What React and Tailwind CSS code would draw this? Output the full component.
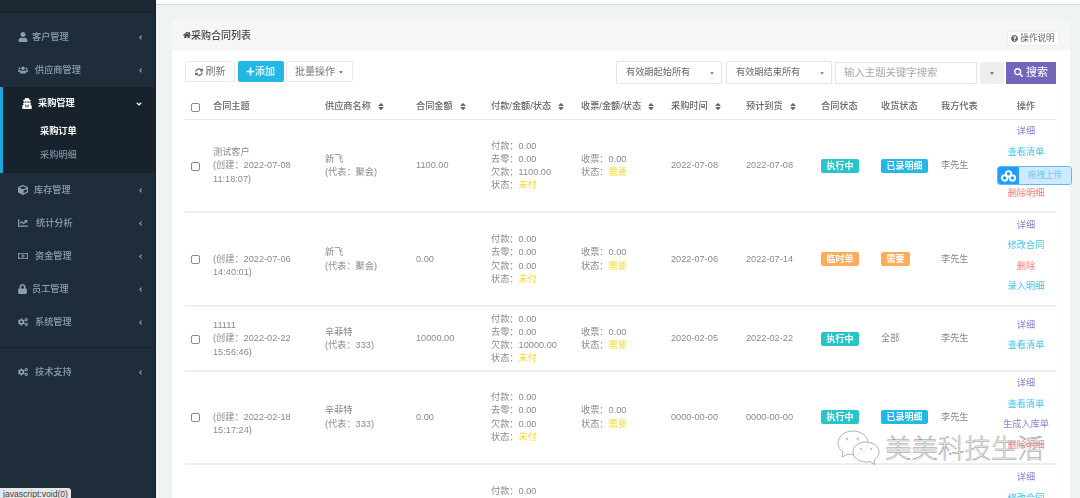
import React from "react";
import {
  FaUser, FaUsers, FaUserSecret, FaCube, FaChartLine, FaRegMoneyBillAlt, FaLock, FaCogs,
  FaAngleLeft, FaAngleDown, FaHome, FaSyncAlt, FaPlus, FaCaretDown, FaQuestionCircle, FaSearch, FaSort,
} from "react-icons/fa";

const font = "font-['Liberation_Sans','Noto_Sans_CJK_SC',sans-serif]";
const cols = "grid grid-cols-[28px_112px_91px_75px_90px_90px_75px_75px_60px_60px_55px_60px]";

const menu = [
  { name: "客户管理", icon: FaUser, gap: "gap-[4px]" },
  { name: "供应商管理", icon: FaUsers, gap: "gap-[7px]" },
];
const menuAfter = [
  { name: "库存管理", icon: FaCube, gap: "gap-[6px]" },
  { name: "统计分析", icon: FaChartLine, gap: "gap-[8px]" },
  { name: "资金管理", icon: FaRegMoneyBillAlt, gap: "gap-[7px]" },
  { name: "员工管理", icon: FaLock, gap: "gap-[5px]" },
  { name: "系统管理", icon: FaCogs, gap: "gap-[7px]" },
];

const purple = "text-[#8d83cc]";
const cyan = "text-[#45c3ea]";
const red = "text-[#f47a7a]";

const rows = [
  {
    h: "h-[93px] pt-[1px]",
    opsPad: "pb-[8px]",
    subject: ["测试客户", "(创建：2022-07-08", "11:18:07)"],
    supplier: "新飞", rep: "(代表：聚会)", amount: "1100.00", owed: "1100.00",
    time: "2022-07-08", eta: "2022-07-08",
    status: ["执行中", "bg-[#27c4c8]"], recv: ["已录明细", "bg-[#23b7e5]"],
    // third link sits under the upload widget
    ops: [["详细", purple], ["查看清单", cyan], ["\u00a0", cyan], ["删除明细", red]],
  },
  {
    h: "h-[94px] pt-[1px]",
    opsPad: "pb-[8px]",
    subject: ["", "(创建：2022-07-06", "14:40:01)"],
    supplier: "新飞", rep: "(代表：聚会)", amount: "0.00", owed: "0.00",
    time: "2022-07-06", eta: "2022-07-14",
    status: ["临时单", "bg-[#fcad5a]"], recv: ["需要", "bg-[#fcad5a]"],
    ops: [["详细", purple], ["修改合同", cyan], ["删除", red], ["录入明细", cyan]],
  },
  {
    h: "h-[65px] pt-[1px]",
    opsPad: "pb-[8px]",
    subject: ["11111", "(创建：2022-02-22", "15:56:46)"],
    supplier: "辛菲特", rep: "(代表：333)", amount: "10000.00", owed: "10000.00",
    time: "2020-02-05", eta: "2022-02-22",
    status: ["执行中", "bg-[#27c4c8]"], recv: "全部",
    ops: [["详细", purple], ["查看清单", cyan]],
  },
  {
    h: "h-[93px] pt-0",
    opsPad: "pb-[7px]",
    subject: ["", "(创建：2022-02-18", "15:17:24)"],
    supplier: "辛菲特", rep: "(代表：333)", amount: "0.00", owed: "0.00",
    time: "0000-00-00", eta: "0000-00-00",
    status: ["执行中", "bg-[#27c4c8]"], recv: ["已录明细", "bg-[#23b7e5]"],
    ops: [["详细", purple], ["查看清单", cyan], ["生成入库单", purple], ["删除明细", red]],
  },
  {
    h: "h-[93px] pt-[1px]",
    opsPad: "pb-[6px]",
    subject: ["", "", ""],
    supplier: "", rep: "", amount: "", owed: "0.00",
    time: "", eta: "",
    status: null, recv: null,
    ops: [["详细", purple], ["修改合同", cyan], ["删除", red], ["录入明细", cyan]],
  },
];

const MenuItem = ({ item }) => {
  const Icon = item.icon;
  return (
    <div className="h-[33px] pl-[18px] pr-[11px] flex items-center justify-between text-[#8aa0b4]">
      <div className={`flex items-center ${item.gap}`}>
        <Icon className={item.icon === FaLock ? "w-[9px] h-[10px]" : "w-[10px] h-[10px]"} />
        <span className="font-medium">{item.name}</span>
      </div>
      <FaAngleLeft className="w-[7px] h-[7px]" />
    </div>
  );
};

const Badge = ({ label, color }) => (
  <span className={`inline-block rounded-[2px] px-[5.5px] h-[14px] leading-[14px] text-[9px] font-bold text-white ${color}`}>
    {label}
  </span>
);

const Sort = () => <FaSort className="w-[8px] h-[9px] text-[#666] ml-[6px]" />;

const HeadCell = ({ label, sort }) => (
  <div className="flex items-center text-[#666] font-medium">
    {label}
    {sort && <Sort />}
  </div>
);

const Checkbox = () => (
  <div className="w-[9px] h-[9px] ml-[6px] rounded-[2px] border border-[#8a8a8a] bg-white" />
);

const Row = ({ row }) => (
  <div className={`${cols} ${row.h} items-center border-b-2 border-[#eceff0] text-[#8a8a8a]`}>
    <Checkbox />
    <div className="flex flex-col">
      {row.subject.map((line, i) => (
        <span key={i} className="h-[13.3px]">{line}</span>
      ))}
    </div>
    <div className="flex flex-col">
      <span className="h-[13.3px]">{row.supplier}</span>
      <span className="h-[13.3px]">{row.rep}</span>
    </div>
    <div>{row.amount}</div>
    <div className="flex flex-col">
      <span className="h-[13.2px]">付款：0.00</span>
      <span className="h-[13.2px]">去零：0.00</span>
      <span className="h-[13.2px]">欠款：{row.owed}</span>
      <span className="h-[13.2px]">状态：<span className="text-[#fad733]">未付</span></span>
    </div>
    <div className="flex flex-col">
      <span className="h-[13.2px]">收票：0.00</span>
      <span className="h-[13.2px]">状态：<span className="text-[#fad733]">需要</span></span>
    </div>
    <div>{row.time}</div>
    <div>{row.eta}</div>
    <div>{row.status && <Badge label={row.status[0]} color={row.status[1]} />}</div>
    <div>
      {Array.isArray(row.recv) ? <Badge label={row.recv[0]} color={row.recv[1]} /> : row.recv}
    </div>
    <div>{row.status && "李先生"}</div>
    <div className={`flex flex-col items-center ${row.opsPad}`}>
      {row.ops.map(([label, color], i) => (
        <span key={i} className={`h-[20.5px] leading-[20.5px] ${color}`}>{label}</span>
      ))}
    </div>
  </div>
);

const App = () => {
  return (
    <div className={`${font} relative flex h-[498px] w-[1080px] overflow-hidden bg-[#f0f3f4] text-[9.2px] leading-[13.2px]`}>
      {/* Sidebar */}
      <aside className="w-[156px] shrink-0 bg-[#1f2c39] border-r border-[#17202a] blur-[0.4px]">
        <div className="h-[13px] border-b border-[#18222c] bg-[#1c2833]" />
        <div className="pt-[8px]">
          {menu.map((item) => <MenuItem key={item.name} item={item} />)}
          <div className="h-[86px] bg-[#18222c] border-l-[3px] border-[#19a9d5]">
            <div className="h-[33px] pl-[18px] pr-[12px] flex items-center justify-between text-white">
              <div className="flex items-center gap-[5px]">
                <FaUserSecret className="w-[12px] h-[11px]" />
                <span className="font-bold">采购管理</span>
              </div>
              <FaAngleDown className="w-[8px] h-[8px]" />
            </div>
            <div className="pl-[37px] text-white font-bold h-[23px] leading-[23px]">采购订单</div>
            <div className="pl-[37px] text-[#8aa0b4] h-[24px] leading-[24px]">采购明细</div>
          </div>
          <div className="pt-[1px]">
            {menuAfter.map((item) => <MenuItem key={item.name} item={item} />)}
          </div>
          <div className="mt-[8px] border-t border-[#18222c] pt-[8px]">
            <MenuItem item={{ name: "技术支持", icon: FaCogs, gap: "gap-[7px]" }} />
          </div>
        </div>
      </aside>

      {/* Main */}
      <main className="flex-1 min-w-0 blur-[0.4px]">
        <div className="h-[5px] bg-white border-b border-[#d5dadd]" />
        <div className="pt-[15px] pl-[16px] pr-[10px]">
          <div className="bg-white">
            <div className="h-[30px] bg-[#f5f7f7] pl-[11px] pr-[11px] flex items-center justify-between">
              <div className="flex items-center mt-[1px] text-[#444] font-medium text-[10px]">
                <FaHome className="w-[8px] h-[8px]" />
                采购合同列表
              </div>
              <button className="h-[15px] w-[52px] mt-[7px] bg-white border border-[#eceff1] rounded-[2px] flex items-center justify-center gap-[2px] text-[#666] text-[8.6px]">
                <FaQuestionCircle className="w-[7px] h-[7px] text-[#58666e]" />
                操作说明
              </button>
            </div>
            <div className="pl-[13px] pr-[14px]">
              {/* Toolbar */}
              <div className="h-[45px] pt-[11px] flex justify-between items-start text-[10px]">
                <div className="flex gap-[2.5px]">
                  <button className="h-[21px] w-[50px] bg-white border border-[#e8ecee] rounded-[2px] flex items-center justify-center gap-[3px] text-[#777]">
                    <FaSyncAlt className="w-[8px] h-[8px] text-[#58666e]" />
                    刷新
                  </button>
                  <button className="h-[21px] w-[46px] bg-[#23b7e5] rounded-[2px] flex items-center justify-center text-white font-medium">
                    <FaPlus className="w-[9px] h-[9px]" />
                    添加
                  </button>
                  <button className="h-[21px] w-[67px] bg-white border border-[#e8ecee] rounded-[2px] flex items-center justify-center gap-[3px] text-[#777]">
                    批量操作
                    <FaCaretDown className="w-[6px] h-[6px] text-[#58666e]" />
                  </button>
                </div>
                <div className="flex">
                  <div className="h-[23px] w-[106px] mr-[4px] bg-white border border-[#dfe5ee] rounded-[2px] pl-[9px] pr-[6px] flex items-center justify-between text-[#666] text-[9.2px]">
                    有效期起始所有
                    <FaCaretDown className="w-[6px] h-[6px] text-[#777]" />
                  </div>
                  <div className="h-[23px] w-[106px] mr-[3px] bg-white border border-[#dfe5ee] rounded-[2px] pl-[9px] pr-[6px] flex items-center justify-between text-[#666] text-[9.2px]">
                    有效期结束所有
                    <FaCaretDown className="w-[6px] h-[6px] text-[#777]" />
                  </div>
                  <div className="h-[22px] w-[142px] mt-[0.5px] mr-[3px] bg-white border border-[#dfe5ee] pl-[8px] flex items-center text-[#a9a9a9] text-[10.4px]">
                    输入主题关键字搜索
                  </div>
                  <div className="h-[22px] w-[24px] mt-[0.5px] mr-[2px] bg-[#eeeeee] rounded-[2px] flex items-center justify-center">
                    <FaCaretDown className="w-[6px] h-[6px] text-[#555]" />
                  </div>
                  <button className="h-[22px] w-[50px] mt-[0.5px] bg-[#7266ba] flex items-center justify-center gap-[3px] text-white text-[11px]">
                    <FaSearch className="w-[9px] h-[9px]" />
                    搜索
                  </button>
                </div>
              </div>

              {/* Table */}
              <div className={`${cols} h-[25px] items-center border-b border-[#e4e8ea]`}>
                <Checkbox />
                <HeadCell label="合同主题" />
                <HeadCell label="供应商名称" sort />
                <HeadCell label="合同金额" sort />
                <HeadCell label="付款/金额/状态" sort />
                <HeadCell label="收票/金额/状态" sort />
                <HeadCell label="采购时间" sort />
                <HeadCell label="预计到货" sort />
                <HeadCell label="合同状态" />
                <HeadCell label="收货状态" />
                <HeadCell label="我方代表" />
                <div className="text-center text-[#666] font-medium">操作</div>
              </div>
              {rows.map((row, i) => <Row key={i} row={row} />)}
            </div>
          </div>
        </div>
      </main>

      {/* Upload widget over the table */}
      <div className="absolute left-[997px] top-[166px] w-[75px] h-[19px] flex rounded-[3px] border border-[#63b8ff] overflow-hidden">
        <div className="w-[21px] bg-[#1e9fff] flex items-center justify-center">
          <svg width="15" height="12" viewBox="0 0 15 12" fill="none" stroke="white" strokeWidth="1.9">
            <circle cx="7.5" cy="3.8" r="2.7" />
            <circle cx="3.6" cy="8" r="2.7" />
            <circle cx="11.4" cy="8" r="2.7" />
          </svg>
        </div>
        <div className="flex-1 bg-[#cdeaff] flex items-center justify-center text-[#79c3f6] text-[8.6px]">拖拽上传</div>
      </div>

      {/* Status bar hint */}
      <div className="absolute left-0 bottom-0 w-[71px] h-[10px] bg-[#e6e6e6] rounded-tr-[3px] pl-[3px] pt-[1px] text-[#444] text-[8.6px] leading-[10px] overflow-hidden">
        javascript:void(0)
      </div>

      {/* Watermark */}
      <div className="absolute left-[837px] top-[430px] flex items-center gap-[4px]">
        <svg width="44" height="38" viewBox="0 0 44 38" fill="white" fillOpacity="0.75" stroke="#a8a8a8" strokeWidth="0.9">
          <path d="M16 1C8 1 1 6 1 13c0 4 2 7 5 9l-1 5 6-3c2 .5 3 .6 5 .6 8 0 15-5 15-11.600S24 1 16 1z" />
          <path d="M29 12c-7 0-13 4.500-13 10s6 10 13 10c1.500 0 2.500-.2 4-.5l5 3-1-4.500c3-2 5-5 5-8 0-5.500-6-10-13-10z" />
          <circle cx="10" cy="9" r="1.400" fill="#bbb" stroke="none" />
          <circle cx="21" cy="9" r="1.400" fill="#bbb" stroke="none" />
          <circle cx="24" cy="19" r="1.200" fill="#bbb" stroke="none" />
          <circle cx="34" cy="19" r="1.200" fill="#bbb" stroke="none" />
        </svg>
        <span className="text-[26.5px] leading-[30px] font-light text-white/50 [-webkit-text-stroke:0.5px_#8f8f8f] whitespace-nowrap">
          美美科技生活
        </span>
      </div>
    </div>
  );
};

export default App;
